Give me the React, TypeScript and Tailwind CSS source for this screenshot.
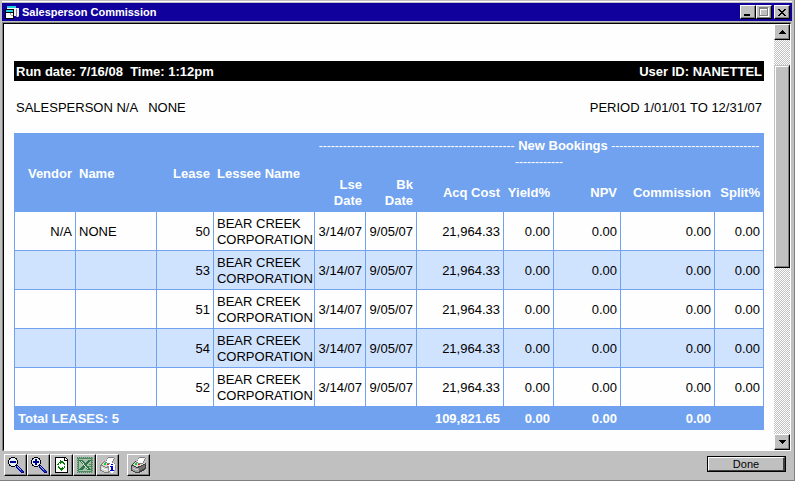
import type { ReactNode } from 'react';

type LeaseRow = {
  vendor: string;
  name: string;
  lease: string;
};

const rows: LeaseRow[] = [
  { vendor: 'N/A', name: 'NONE', lease: '50' },
  { vendor: '', name: '', lease: '53' },
  { vendor: '', name: '', lease: '51' },
  { vendor: '', name: '', lease: '54' },
  { vendor: '', name: '', lease: '52' },
];

export default function App() {
  return (
    <div className="flex h-screen flex-col border-r border-b border-[#808080] bg-[#c0c0c0] pr-[2px] pl-[2px] font-['Liberation_Sans',Arial,sans-serif] text-[13px] leading-4 text-black">
      <div className="h-[3px] shrink-0 border-t border-[#c0c0c0]">
        <div className="h-px bg-white" />
      </div>
      <TitleBar />
      <div className="mt-px mr-px flex min-h-0 flex-1 border-t border-l border-[#808080]">
        <div className="flex min-w-0 flex-1 border-t border-r border-b border-l border-t-black border-r-white border-b-white border-l-black bg-[#fefefe]">
          <Report />
          <ScrollBar />
        </div>
      </div>
      <Toolbar />
    </div>
  );
}

function TitleBar() {
  return (
    <header className="flex h-[18px] shrink-0 items-center bg-[#10009c] pr-[2px] pl-[3px]">
      <AppIcon />
      <h1 className="ml-[2px] flex-1 text-[11px] font-bold text-white">
        Salesperson Commission
      </h1>
      <button aria-label="Minimize" className={captionButtonClassName}>
        <svg className="h-2 w-2" shapeRendering="crispEdges" viewBox="0 0 8 8">
          <path d="M0 6h6v2H0z" />
        </svg>
      </button>
      <button aria-label="Maximize" className={captionButtonClassName}>
        <svg
          className="h-[10px] w-[10px]"
          shapeRendering="crispEdges"
          viewBox="0 0 10 10"
        >
          <path d="M1 1h9v9H1zM2 3h7v6H2z" fill="#fff" fillRule="evenodd" />
          <path d="M0 0h9v9H0zM1 2h7v6H1z" fill="#808080" fillRule="evenodd" />
        </svg>
      </button>
      <button aria-label="Close" className={`${captionButtonClassName} ml-[2px]`}>
        <svg className="h-[7px] w-2" shapeRendering="crispEdges" viewBox="0 0 8 7">
          <path d="M0 0h2v1H0zM6 0h2v1H6zM1 1h2v1H1zM5 1h2v1H5zM2 2h4v1H2zM3 3h2v1H3zM2 4h4v1H2zM1 5h2v1H1zM5 5h2v1H5zM0 6h2v1H0zM6 6h2v1H6z" />
        </svg>
      </button>
    </header>
  );
}

function Report() {
  return (
    <main className="min-w-0 flex-1 overflow-hidden px-[10px] pt-[37px]">
      <div className="flex h-5 items-center justify-between bg-black px-[2px] pt-[2px] font-bold text-white">
        <p className="whitespace-pre">{'Run date: 7/16/08  Time: 1:12pm'}</p>
        <p>User ID: NANETTEL</p>
      </div>
      <div className="flex justify-between px-[2px] pt-[19px] pb-[17px]">
        <p className="whitespace-pre">{'SALESPERSON N/A   NONE'}</p>
        <p>PERIOD 1/01/01 TO 12/31/07</p>
      </div>
      <table className="w-full table-fixed border-collapse text-right">
        <colgroup>
          <col className="w-[61px]" />
          <col />
          <col className="w-[57px]" />
          <col className="w-[101px]" />
          <col className="w-[51px]" />
          <col className="w-[51px]" />
          <col className="w-[87px]" />
          <col className="w-[50px]" />
          <col className="w-[67px]" />
          <col className="w-[94px]" />
          <col className="w-[49px]" />
        </colgroup>
        <thead className="bg-[#70a2f0] text-white">
          <tr className="h-[39px]">
            <th className={cellClassName} rowSpan={2}>
              Vendor
            </th>
            <th className={`${cellClassName} text-left`} rowSpan={2}>
              Name
            </th>
            <th className={cellClassName} rowSpan={2}>
              Lease
            </th>
            <th className={`${cellClassName} text-left`} rowSpan={2}>
              Lessee Name
            </th>
            <th
              className={`${cellClassName} text-center whitespace-nowrap`}
              colSpan={7}
            >
              <Dashes count={49} /> New Bookings <Dashes count={37} />
              <br />
              <Dashes count={12} />
            </th>
          </tr>
          <tr className="h-[39px]">
            <th className={cellClassName}>
              Lse
              <br />
              Date
            </th>
            <th className={cellClassName}>
              Bk
              <br />
              Date
            </th>
            <th className={cellClassName}>Acq Cost</th>
            <th className={cellClassName}>Yield%</th>
            <th className={cellClassName}>NPV</th>
            <th className={cellClassName}>Commission</th>
            <th className={cellClassName}>Split%</th>
          </tr>
        </thead>
        <tbody>
          {rows.map((row) => (
            <tr className="h-[39px] even:bg-[#d0e3fe]" key={row.lease}>
              <td className={cellClassName}>{row.vendor}</td>
              <td className={`${cellClassName} text-left`}>{row.name}</td>
              <td className={cellClassName}>{row.lease}</td>
              <td className={`${cellClassName} text-left`}>
                BEAR CREEK CORPORATION
              </td>
              <td className={cellClassName}>3/14/07</td>
              <td className={cellClassName}>9/05/07</td>
              <td className={cellClassName}>21,964.33</td>
              <td className={cellClassName}>0.00</td>
              <td className={cellClassName}>0.00</td>
              <td className={cellClassName}>0.00</td>
              <td className={cellClassName}>0.00</td>
            </tr>
          ))}
        </tbody>
        <tfoot className="bg-[#70a2f0] text-white">
          <tr className="h-[23px]">
            <th className={`${cellClassName} text-left`} colSpan={6}>
              Total LEASES: 5
            </th>
            <th className={cellClassName}>109,821.65</th>
            <th className={cellClassName}>0.00</th>
            <th className={cellClassName}>0.00</th>
            <th className={cellClassName}>0.00</th>
            <td className={cellClassName} />
          </tr>
        </tfoot>
      </table>
    </main>
  );
}

function Dashes({ count }: { count: number }) {
  return <span className="text-xs font-normal">{'-'.repeat(count)}</span>;
}

function ScrollBar() {
  return (
    <div className="flex w-4 shrink-0 flex-col bg-[repeating-conic-gradient(#c0c0c0_0_25%,#ffffff_0_50%)] bg-[length:2px_2px]">
      <button aria-label="Scroll up" className={scrollButtonClassName}>
        <svg className="h-1 w-[7px]" shapeRendering="crispEdges" viewBox="0 0 7 4">
          <path d="M3 0h1v1H3zM2 1h3v1H2zM1 2h5v1H1zM0 3h7v1H0z" />
        </svg>
      </button>
      <div className="mt-[25px] h-[203px] border-t border-r border-b border-l border-t-[#c0c0c0] border-r-black border-b-black border-l-[#c0c0c0]">
        <div className="h-full border border-t-white border-r-[#808080] border-b-[#808080] border-l-white bg-[#c0c0c0]" />
      </div>
      <button
        aria-label="Scroll down"
        className={`${scrollButtonClassName} mt-auto`}
      >
        <svg className="h-1 w-[7px]" shapeRendering="crispEdges" viewBox="0 0 7 4">
          <path d="M0 0h7v1H0zM1 1h5v1H1zM2 2h3v1H2zM3 3h1v1H3z" />
        </svg>
      </button>
    </div>
  );
}

function Toolbar() {
  return (
    <footer className="flex h-[29px] shrink-0 items-start pt-[3px] pr-[6px] pl-[2px]">
      <ToolButton label="Zoom out">
        <Magnifier />
      </ToolButton>
      <ToolButton label="Zoom in">
        <Magnifier plus />
      </ToolButton>
      <ToolButton label="Refresh">
        <path d="M1 0h10l3 3v13H1z" fill="#000" />
        <path d="M2 1h8v3h3v11H2z" fill="#fff" />
        <path d="M11 1h1v1h1v1h-2z" fill="#fff" />
        <path
          d="M6 3h1v1h2v1h1v1h1v2h-1V7H9V6H7v1H6V6H5V5h1zM4 6h1v2H4zM3 7h1v1H3zM4 9h1v1h1v1h2v-1h1v1h1v1H9v1H8v1H7v-1H6v-1H5v-1H4zM10 9h1v2h-1z"
          fill="#008000"
        />
      </ToolButton>
      <ToolButton label="Export to Excel">
        <path d="M0 0h16v16H0z" fill="#4c8a60" />
        <path d="M2 2h12v12H2z" fill="#a8c0ac" />
        <path
          d="M.5.5h15v15H.5z"
          fill="none"
          stroke="#9ab89e"
          strokeDasharray="1 1"
        />
        <path
          d="M2 3h4v1h1v1h1v1h1V5h1V4h1V3h3v1h-1v1h-1v1h-1v1h-1v2h1v1h1v1h1v1h1v1h-4v-1h-1v-1H9v-1H8v1H7v1H6v1H2v-1h1v-1h1v-1h1V9h1V7H5V6H4V5H3V4H2z"
          fill="#2f7347"
        />
        <path
          d="M4 4h1v1h1v1h1v2h1v1h1v1h1v1h1v1h-1v-1H9v-1H8V9H7V8H6V6H5V5H4z"
          fill="#d4e4d4"
        />
        <path d="M11 9h3v1h-3zM12 7h2v1h-2z" fill="#4c8a60" />
      </ToolButton>
      <ToolButton label="Print information">
        <Printer light />
        <path
          d="M10 6h4v1h1v1h1v5h-1v1h-1v1h-1v1h-2v-1h-1v-1H9v-1H8V8h1V7h1z"
          fill="#fff"
        />
        <path d="M15 8h1v5h-1v1h-1v-1h1zM8 9h1v4H8z" fill="#9090b0" />
        <path
          d="M11 7h2v1h-2zM10 9h3v4h1v1h-4v-1h1v-3h-1z"
          fill="#0000d0"
        />
      </ToolButton>
      <div className="ml-2 flex">
        <ToolButton label="Print">
          <Printer />
        </ToolButton>
      </div>
      <button className="mt-[2px] ml-auto flex h-4 w-[79px] border border-black">
        <span className="flex h-full w-full items-center justify-center border-t border-r-2 border-b border-l border-t-white border-r-[#404040] border-b-[#404040] border-l-white text-[11px]">
          Done
        </span>
      </button>
    </footer>
  );
}

function ToolButton({ children, label }: { children: ReactNode; label: string }) {
  return (
    <button
      aria-label={label}
      className="flex h-[22px] w-[23px] items-center justify-center border border-t-white border-r-black border-b-black border-l-white shadow-[inset_-1px_-1px_0_#808080]"
    >
      <svg className="h-4 w-4" shapeRendering="crispEdges" viewBox="0 0 16 16">
        {children}
      </svg>
    </button>
  );
}

function Magnifier({ plus = false }: { plus?: boolean }) {
  return (
    <>
      <path
        d="M3 0h4v1h2v2h1v4H9v2H7v1H3V9H1V7H0V3h1V1h2z"
        fill="#000"
      />
      <path d="M3 1h4v1h1v1h1v4H8v1H7v1H3V8H2V7H1V3h1V2h1z" fill="#e4f0f8" />
      <path d="M2 4h6v2H2z" fill="#000090" />
      {plus ? <path d="M4 2h2v6H4z" fill="#000090" /> : null}
      <path
        d="M8 8h2v1h1v1h1v1h1v1h1v1h1v1h1v2h-3v-1h-1v-1h-1v-1h-1v-1H9v-1H8z"
        fill="#000080"
      />
      <path
        d="M9 9h1v1h1v1h1v1h1v1h1v1h1v1h-2v-1h-1v-1h-1v-1h-1v-1H9z"
        fill="#1830d0"
      />
      <path
        d="M9 9h1v1H9zM10 10h1v1h-1zM11 11h1v1h-1zM12 12h1v1h-1z"
        fill="#a0b8f0"
      />
    </>
  );
}

function Printer({ light = false }: { light?: boolean }) {
  return (
    <>
      <path
        d="M4 4h1v1h8v1h2v6h-1v1h-1v1h-2v1H9v1H4v-1H2v-1H0V8h1V7h1V6h1V5h1z"
        fill={light ? '#808080' : '#404040'}
      />
      <path d="M4 5h9v1h1v1h-2v1h-2v1H7v1H5V9H3V8H2V7h1V6h1z" fill="#d8d8d8" />
      <path
        d="M1 9h2v1h2v1h3v4H4v-1H2v-1H1z"
        fill={light ? '#d8d8d8' : '#a0a0a0'}
      />
      <path
        d="M8 10h2V9h2V8h2v3h-1v1h-2v1H9v1H8z"
        fill={light ? '#b8b8b8' : '#707070'}
      />
      <path d="M2 11h2v1h3v1H4v-1H2z" fill={light ? '#fff' : '#d0d0d0'} />
      <path d="M8 0h6v1h1v1h-1v2h-1v2h-1v1H7V6H5V5h1V3h1V1h1z" fill="#808080" />
      <path d="M8 1h6v1h-1v2h-1v2H7V5H6V4h1V2h1z" fill="#fff" />
      <path d="M4 6h2v2H4z" fill="#00e020" />
      <path d="M7 7h2v1H7z" fill="#e02020" />
    </>
  );
}

function AppIcon() {
  return (
    <svg
      aria-hidden="true"
      className="h-[15px] w-[15px]"
      shapeRendering="crispEdges"
      viewBox="0 0 15 15"
    >
      <path d="M2 1h9v2h3v9h-3v-1H2z" fill="#f0f0f0" />
      <path d="M2 1h9v2H2z" fill="#20d0e0" />
      <path d="M2 3h9v1H2z" fill="#fff" />
      <path d="M11 4h1v8h-1zM13 11h1v1h-1z" fill="#8088a0" />
      <path d="M0 4h9v10H0z" fill="#000" />
      <path d="M1 5h7v2H1z" fill="#20d0e0" />
      <path d="M1 8h7v5H1z" fill="#fff" />
      <path d="M5 8h1v2H5zM6 10h2v1H6z" fill="#a0a0a0" />
    </svg>
  );
}

const bevelClassName =
  'flex shrink-0 items-center justify-center border border-t-white border-r-black border-b-black border-l-white bg-[#c0c0c0] shadow-[inset_-1px_-1px_0_#808080]';
const captionButtonClassName = `${bevelClassName} h-[14px] w-4`;
const scrollButtonClassName = `${bevelClassName} h-4 w-4`;
const cellClassName = 'border border-[#70a2f0] px-[3px] pt-[2px] pb-0';
